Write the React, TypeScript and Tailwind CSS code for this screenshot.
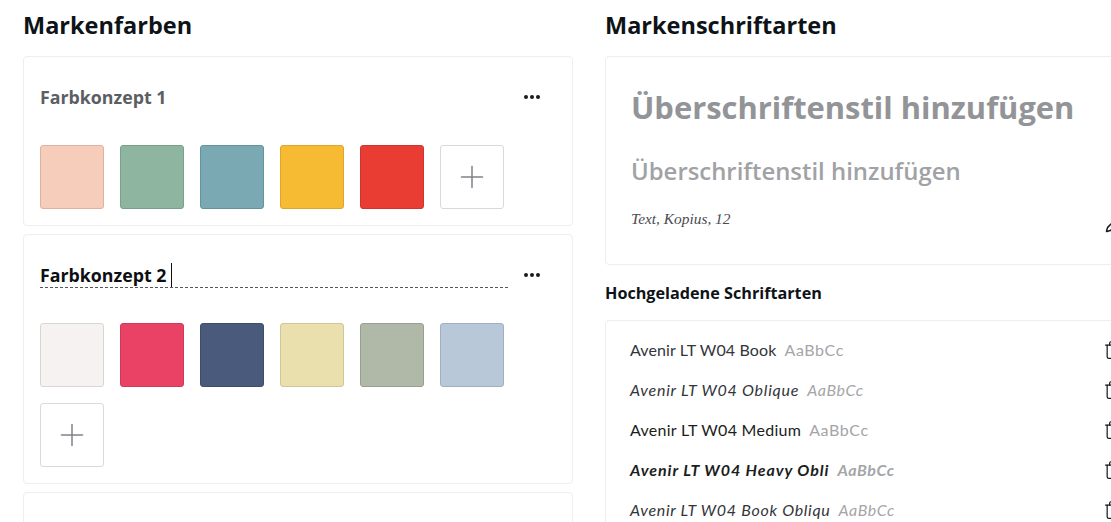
import { Pencil, Plus, Trash } from 'lucide-react'

type Swatch = { fill: string; edge: string }

const conceptOne: Swatch[] = [
  { fill: '#f6cdbb', edge: '#dcb3a1' },
  { fill: '#8eb5a0', edge: '#7a9f8b' },
  { fill: '#7aa9b3', edge: '#66929c' },
  { fill: '#f6bb33', edge: '#dca62b' },
  { fill: '#e93d33', edge: '#cf352c' },
]

const conceptTwo: Swatch[] = [
  { fill: '#f7f2f2', edge: '#d9d5d5' },
  { fill: '#e94265', edge: '#d03a5a' },
  { fill: '#4a5a7c', edge: '#3f4d6b' },
  { fill: '#e9e0ae', edge: '#cfc79a' },
  { fill: '#b0b8a8', edge: '#999f92' },
  { fill: '#b8c8d8', edge: '#a0b0c0' },
]

const fonts = [
  { name: 'Avenir LT W04 Book', style: 'font-normal tracking-[0.12px] text-[#33353a]' },
  { name: 'Avenir LT W04 Oblique', style: 'font-normal italic tracking-[0.76px] text-[#33353a]' },
  { name: 'Avenir LT W04 Medium', style: 'font-normal tracking-[0.27px] text-[#1b1d20]' },
  { name: 'Avenir LT W04 Heavy Obli', style: 'font-bold italic tracking-[0.93px] text-[#1b1d20]' },
  { name: 'Avenir LT W04 Book Obliqu', style: 'font-normal italic tracking-[0.7px] text-[#33353a]' },
]

function Dots() {
  return (
    <div className="flex w-[48px] shrink-0 items-center justify-center gap-[2px]">
      <span className="h-[4px] w-[4px] rounded-full bg-[#1a1c20]" />
      <span className="h-[4px] w-[4px] rounded-full bg-[#1a1c20]" />
      <span className="h-[4px] w-[4px] rounded-full bg-[#1a1c20]" />
    </div>
  )
}

function Swatches({ colors }: { colors: Swatch[] }) {
  return (
    <div className="flex flex-wrap gap-4">
      {colors.map((color) => (
        <div
          key={color.fill}
          className="h-16 w-16 rounded-[3px] border"
          style={{ backgroundColor: color.fill, borderColor: color.edge }}
        />
      ))}
      <div className="flex h-16 w-16 items-center justify-center rounded-[3px] border border-[#d9d9db] bg-white">
        <Plus size={36} strokeWidth={1} className="text-[#808286]" />
      </div>
    </div>
  )
}

export default function App() {
  return (
    <div
      className="grid h-[522px] w-[1111px] grid-cols-[550px_550px] gap-x-8 overflow-hidden bg-white pl-[23px] text-[#0e1318]"
      style={{ fontFamily: '"Open Sans", sans-serif' }}
    >
      <section>
        <h2 className="h-[56px] pt-[8px] text-[23.5px] font-bold leading-[34px]">Markenfarben</h2>

        <div className="h-[170px] rounded-[4px] border border-[#eeeeef] px-4">
          <div className="flex h-[88px] items-center">
            <p className="mt-[-8px] flex-1 text-[17.8px] font-bold leading-6 text-[#5c5e63]">Farbkonzept 1</p>
            <div className="mt-[-8px]">
              <Dots />
            </div>
          </div>
          <Swatches colors={conceptOne} />
        </div>

        <div className="mt-2 h-[250px] rounded-[4px] border border-[#eeeeef] px-4">
          <div className="flex h-[88px] items-start pt-[28px]">
            <div className="flex h-[25px] w-[468px] items-center border-b border-dashed border-[#55575b]">
              <p className="text-[17.8px] font-bold leading-6 text-[#0e0f12]">Farbkonzept 2</p>
              <span className="ml-[5px] h-[24px] w-px bg-[#0e0f12]" />
            </div>
            <div className="mt-[4px] flex h-4 items-center">
              <Dots />
            </div>
          </div>
          <Swatches colors={conceptTwo} />
        </div>

        <div className="mt-2 h-[80px] rounded-[4px] border border-[#eeeeef]" />
      </section>

      <section>
        <h2 className="h-[56px] pt-[8px] text-[23.5px] font-bold leading-[34px]">Markenschriftarten</h2>

        <div className="h-[209px] rounded-[4px] border border-[#eeeeef] pl-[25px] pr-[31px] pt-[28px]">
          <p className="text-[30.9px] font-bold leading-[44px] text-[#929497]">Überschriftenstil hinzufügen</p>
          <p className="mt-[20px] text-[23.9px] font-semibold leading-[44px] text-[#a0a2a5]">Überschriftenstil hinzufügen</p>
          <div className="mt-[16px] flex items-start justify-between">
            <p
              className="text-[15.4px] font-normal italic leading-5 text-[#4a4c50]"
              style={{ fontFamily: '"Liberation Serif", serif' }}
            >
              Text, Kopius, 12
            </p>
            <Pencil size={18} strokeWidth={2} className="mt-[6px] text-[#1a1c20]" />
          </div>
        </div>

        <h3 className="mt-[16px] text-[16.2px] font-bold leading-6">Hochgeladene Schriftarten</h3>

        <div className="mt-[15px] rounded-[4px] border border-[#eeeeef] pl-[24px] pr-[31px] pt-[9px]" style={{ fontFamily: 'Lato, sans-serif' }}>
          {fonts.map((font) => (
            <div key={font.name} className="flex h-10 items-center justify-between">
              <p className={`text-[16px] leading-5 ${font.style}`}>
                {font.name}
                <span className="ml-2 tracking-[0.6px] text-[#a4a5a8]">AaBbCc</span>
              </p>
              <Trash size={20} strokeWidth={1.5} className="text-[#1a1c20]" />
            </div>
          ))}
        </div>
      </section>
    </div>
  )
}
